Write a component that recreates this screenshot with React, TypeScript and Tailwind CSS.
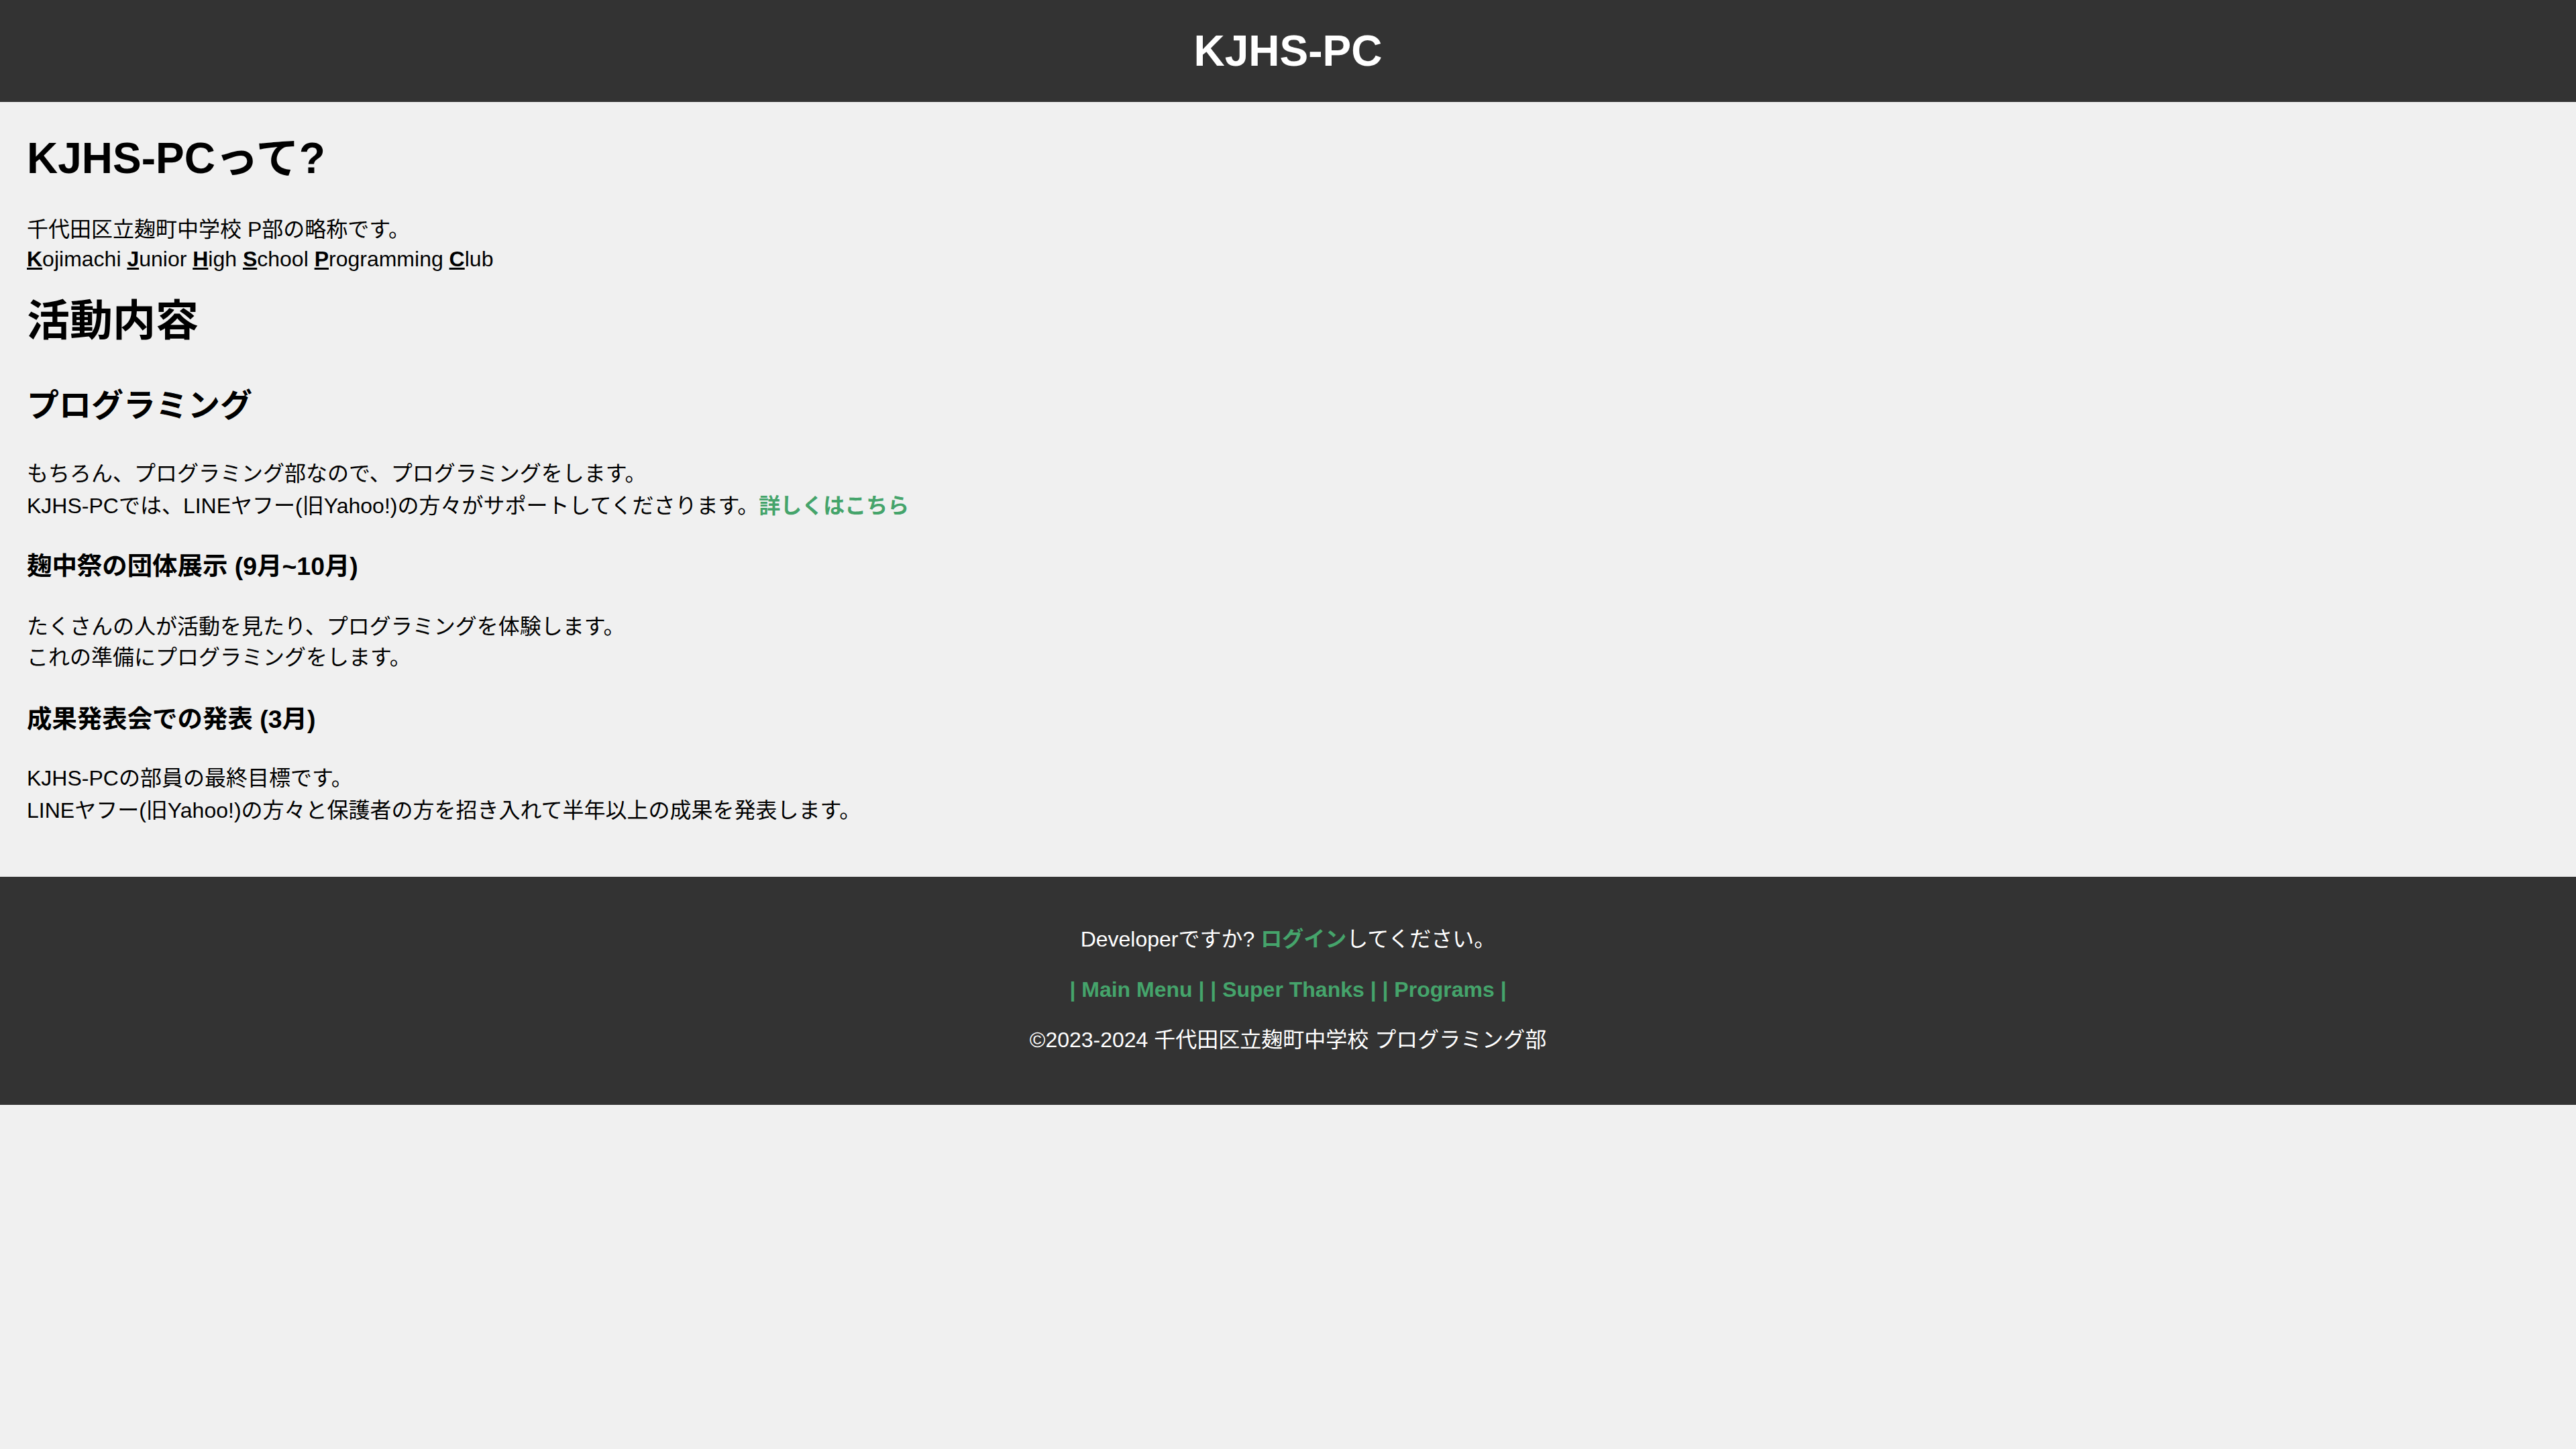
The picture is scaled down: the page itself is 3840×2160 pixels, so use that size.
const font = { fontFamily: '"Liberation Sans", "Noto Sans CJK JP", sans-serif' };

function Initial({ c }: { c: string }) {
    return (
        <u>
            <b>{c}</b>
        </u>
    );
}

export default function App() {
    return (
        <div style={font} className="min-h-screen bg-[#f0f0f0] text-black">
            {/* Header */}
            <header className="flex h-[152px] items-center justify-center bg-[#333333]">
                <h1 className="text-[64px] font-bold leading-[74px] text-white">KJHS-PC</h1>
            </header>

            {/* Main */}
            <main className="px-[40px] pt-[47px] pb-[73px]">
                <h1 className="text-[64px] font-bold leading-[74px]">KJHS-PCって?</h1>
                <p className="mt-[47px] text-[32px] leading-[44px]">
                    千代田区立麹町中学校 P部の略称です。
                    <br />
                    <Initial c="K" />ojimachi <Initial c="J" />unior <Initial c="H" />igh <Initial c="S" />chool{' '}
                    <Initial c="P" />rogramming <Initial c="C" />lub
                </p>

                <h1 className="mt-[33px] text-[64px] font-bold leading-[74px]">活動内容</h1>

                <h2 className="mt-[62px] text-[48px] font-bold leading-[56px]">プログラミング</h2>
                <p className="mt-[51px] text-[32px] leading-[44px]">
                    もちろん、プログラミング部なので、プログラミングをします。
                    <br />
                    KJHS-PCでは、LINEヤフー(<span className="leading-[52px]">旧</span>Yahoo!)の方々がサポートしてくださります。
                    <a href="#" className="font-bold text-[#45a46b]">
                        詳しくはこちら
                    </a>
                </p>

                <h3 className="mt-[42px] text-[37.44px] font-bold leading-[44px]">麹中祭の団体展示 (9月~10月)</h3>
                <p className="mt-[45px] text-[32px] leading-[46px]">
                    たくさんの人が活動を見たり、プログラミングを体験します。
                    <br />
                    これの準備にプログラミングをします。
                </p>

                <h3 className="mt-[47px] text-[37.44px] font-bold leading-[44px]">成果発表会での発表 (3月)</h3>
                <p className="mt-[44px] text-[32px] leading-[44px]">
                    KJHS-PCの部員の最終目標です。
                    <br />
                    LINEヤフー(<span className="leading-[52px]">旧</span>Yahoo!)の方々と保護者の方を招き入れて半年以上の成果を発表します。
                </p>
            </main>

            {/* Footer */}
            <footer className="bg-[#333333] px-[40px] pt-[72px] pb-[76px] text-center text-[32px] leading-[42px] text-white">
                <p>
                    Developerですか?{' '}
                    <a href="#" className="font-bold text-[#45a46b]">
                        ログイン
                    </a>
                    してください。
                </p>
                <p className="mt-[33px] font-bold text-[#45a46b]">
                    <a href="#">| Main Menu |</a> <a href="#">| Super Thanks |</a> <a href="#">| Programs |</a>
                </p>
                <p className="mt-[33px]">©2023-2024 千代田区立麹町中学校 プログラミング部</p>
            </footer>
        </div>
    );
}
